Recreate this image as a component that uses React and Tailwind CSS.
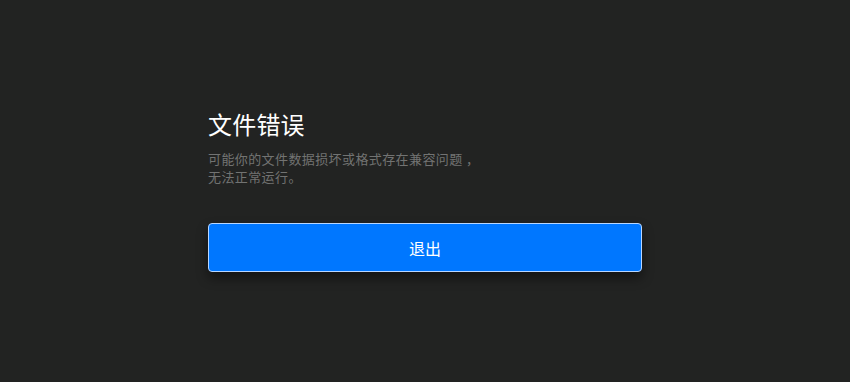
export default function App() {
  return (
    <div
      className="w-[850px] h-[382px] bg-[#222322] flex justify-center pt-[108px]"
      style={{ fontFamily: '"Noto Sans CJK SC", "Noto Sans", sans-serif' }}
    >
      <div className="w-[434px] flex flex-col">
        <h1 className="text-[24px] leading-[32px] text-white font-normal tracking-[0.2px]">文件错误</h1>
        <p className="mt-[10px] text-[13px] leading-[18px] text-[#727372] tracking-[0.4px]">
          可能你的文件数据损坏或格式存在兼容问题 ，
          <br />
          无法正常运行。
        </p>
        <button className="mt-[37px] h-[49px] w-full rounded-[4px] bg-[#0077ff] border border-[#b8d6ff] text-white text-[16px] shadow-[0_6px_12px_rgba(0,0,0,0.45)]">
          退出
        </button>
      </div>
    </div>
  );
}
